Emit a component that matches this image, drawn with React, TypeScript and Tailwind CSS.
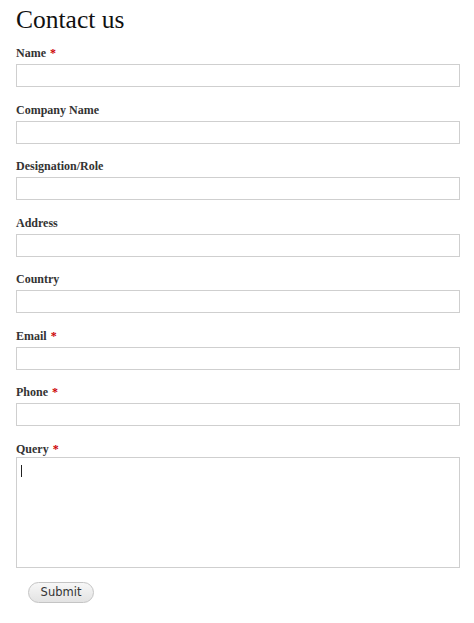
import React from 'react';

const FIELDS = [
  { label: 'Name', required: true },
  { label: 'Company Name', required: false },
  { label: 'Designation/Role', required: false },
  { label: 'Address', required: false },
  { label: 'Country', required: false },
  { label: 'Email', required: true },
  { label: 'Phone', required: true },
];

const FieldLabel = ({ label, required, tight }: { label: string; required: boolean; tight?: boolean }) => (
  <label
    className={
      tight
        ? 'block h-[16px] text-[12px] font-bold leading-[16px] text-[#333]'
        : 'mb-[3px] block h-[16px] text-[12px] font-bold leading-[16px] text-[#333]'
    }
  >
    {label}
    {required && <span className="ml-[4px] text-[#c00]">*</span>}
  </label>
);

const App = () => {
  return (
    <div className="min-h-[623px] w-full bg-white px-[16px] pt-[5px] font-['Liberation_Serif',serif] text-[#222]">
      <h1 className="mb-[10px] h-[30px] text-[25.5px] font-normal leading-[30px] text-[#111]">Contact us</h1>
      <form className="flex w-[444px] flex-col" onSubmit={(e) => e.preventDefault()}>
        {FIELDS.map((field) => (
          <div key={field.label} className="mb-[14.5px] flex flex-col">
            <FieldLabel label={field.label} required={field.required} />
            <input
              type="text"
              className="h-[23px] w-full border border-[#cfcfcf] bg-white px-[4px] text-[12px] outline-none"
            />
          </div>
        ))}
        <div className="flex flex-col">
          <FieldLabel label="Query" required tight />
          <div className="relative">
            <textarea className="block h-[111px] w-full resize-none border border-[#cfcfcf] bg-white px-[4px] text-[12px] outline-none" />
            <span className="absolute left-[5px] top-[8px] h-[12px] w-px bg-[#222]" />
          </div>
        </div>
        <div className="pl-[12px] pt-[11px]">
          <button
            type="submit"
            className="h-[21px] w-[66px] rounded-full border border-[#c4c4c4] bg-gradient-to-b from-[#f7f7f7] to-[#e3e3e3] font-['DejaVu_Sans',sans-serif] text-[11.5px] leading-[19px] text-[#333]"
          >
            Submit
          </button>
        </div>
      </form>
    </div>
  );
};

export default App;
